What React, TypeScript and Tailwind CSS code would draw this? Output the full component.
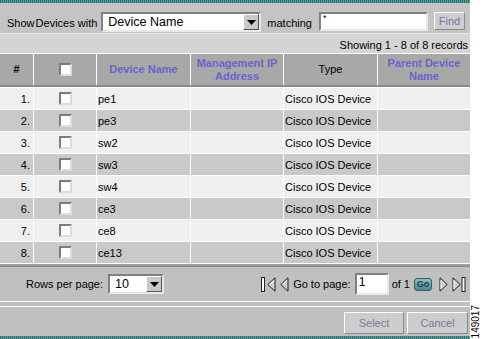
import React from "react";

const rows = ["pe1", "pe3", "sw2", "sw3", "sw4", "ce3", "ce8", "ce13"];

const cols = "grid grid-cols-[33px_62px_93px_92px_93px_92px] gap-x-px";

function Check() {
  return (
    <span className="block w-[13px] h-[13px] bg-white border-2 border-t-[#7b7b7b] border-l-[#7b7b7b] border-r-[#dcdcdc] border-b-[#dcdcdc]" />
  );
}

function Combo({ value, width }: { value: string; width: string }) {
  return (
    <div
      className={`${width} h-[20px] flex items-center bg-white border-2 border-t-[#808080] border-l-[#808080] border-r-[#e8e8e8] border-b-[#e8e8e8]`}
    >
      <span className="flex-1 pl-[5px] text-[12.5px] leading-none text-black">{value}</span>
      <span className="w-[16px] h-[16px] flex items-center justify-center bg-[#c8c8c8] border border-t-white border-l-white border-r-[#555] border-b-[#555]">
        <svg width="9" height="5" viewBox="0 0 9 5">
          <polygon points="0,0 9,0 4.5,5" fill="#000" />
        </svg>
      </span>
    </div>
  );
}

// pager arrows: outlined triangle, optional end bar
function PagerIcon({ dir, bar }: { dir: "l" | "r"; bar?: boolean }) {
  if (dir === "l") {
    return (
      <svg width={bar ? 15 : 9} height="15" viewBox={bar ? "0 0 15 15" : "6 0 9 15"}>
        {bar && <rect x="0.5" y="0.5" width="3" height="14" fill="#fff" stroke="#222" />}
        <polygon points="14,0.8 6.8,7.5 14,14.2" fill="#cfcfcf" stroke="#222" strokeLinejoin="round" />
        <line x1="13" y1="3" x2="8.8" y2="7.3" stroke="#fff" />
      </svg>
    );
  }
  return (
    <svg width={bar ? 14 : 9} height="15" viewBox={bar ? "0 0 14 15" : "0 0 9 15"}>
      <polygon points="1,0.8 8.2,7.5 1,14.2" fill="#cfcfcf" stroke="#222" strokeLinejoin="round" />
      <line x1="2" y1="3" x2="2" y2="12" stroke="#fff" />
      {bar && <rect x="10" y="0.5" width="3" height="14" fill="#fff" stroke="#222" />}
    </svg>
  );
}

export default function App() {
  return (
    <div className="w-[482px] h-[339px] bg-white flex font-['Liberation_Sans',Arial,sans-serif] text-[11px] text-black">
      <div className="w-[470px] flex flex-col bg-[#c4c4c4]">
        <div className="h-[3px] bg-[repeating-linear-gradient(90deg,#2c6f6d_0_1px,#5e9c98_1px_2px)]" />

        {/* search */}
        <div className="h-[30px] flex items-start pt-[9px] pl-[7px]">
          <span className="mt-[5px] leading-[13px]">
            Show<span className="-ml-[2px]"> </span>Devices with
          </span>
          <div className="ml-[4px]">
            <Combo value="Device Name" width="w-[160px]" />
          </div>
          <span className="ml-[6px] mt-[5px] leading-[13px]">matching</span>
          <div className="ml-[7px] w-[109px] h-[19px] bg-white border-2 border-t-[#808080] border-l-[#808080] border-r-[#e8e8e8] border-b-[#e8e8e8] pl-[2px] text-[9px] leading-[9px]">
            *
          </div>
          <button className="ml-[6px] w-[31px] h-[18px] bg-[#cfcfcf] border border-t-white border-l-white border-r-[#8a8a8a] border-b-[#8a8a8a] text-[11px] leading-none text-[#7474a4]">
            Find
          </button>
        </div>
        <div className="h-px bg-[#e6e6e6]" />

        <div className="h-[19px] bg-[#d4d4d4] text-right pr-[2px] pt-[5px] leading-[13px]">
          Showing 1 - 8 of 8 records
        </div>
        <div className="h-px bg-white" />

        {/* header */}
        <div className={`${cols} h-[31px] bg-white font-bold leading-[13px]`}>
          <div className="bg-[#a8a8a8] flex items-center justify-center">#</div>
          <div className="bg-[#a8a8a8] flex items-center justify-center">
            <Check />
          </div>
          <div className="bg-[#a8a8a8] flex items-center justify-center text-[#6666cc]">Device Name</div>
          <div className="bg-[#a8a8a8] flex items-center justify-center text-center text-[#6666cc]">
            Management IP Address
          </div>
          <div className="bg-[#a8a8a8] flex items-center justify-center font-normal">Type</div>
          <div className="bg-[#a8a8a8] flex items-center justify-center text-center text-[#6666cc]">
            Parent Device Name
          </div>
        </div>
        <div className="h-[2px] bg-[#8a8a8a]" />

        {/* rows */}
        <div className="flex flex-col gap-y-px bg-white py-px">
          {rows.map((name, i) => {
            const bg = i % 2 === 0 ? "bg-[#efefef]" : "bg-[#c9c9c9]";
            return (
              <div key={name} className={`${cols} h-[21px] leading-[13px]`}>
                <div className={`${bg} flex items-center justify-end pr-[3px] pt-px`}>{i + 1}.</div>
                <div className={`${bg} flex items-center justify-center pl-px`}>
                  <Check />
                </div>
                <div className={`${bg} flex items-center pl-px pt-px`}>{name}</div>
                <div className={bg} />
                <div className={`${bg} flex items-center pl-px pt-px`}>Cisco IOS Device</div>
                <div className={bg} />
              </div>
            );
          })}
        </div>
        <div className="h-[3px] bg-[linear-gradient(#a8a8a8,#858585)]" />

        {/* pagination */}
        <div className="h-[34px] flex items-center pl-[26px] pr-[4px] bg-[#c0c0c0]">
          <span className="leading-[13px]">Rows per page:</span>
          <div className="ml-[5px]">
            <Combo value="10" width="w-[56px]" />
          </div>
          <div className="ml-auto flex items-center">
            <PagerIcon dir="l" bar />
            <span className="ml-[4px] flex">
              <PagerIcon dir="l" />
            </span>
            <span className="ml-[4px] leading-[13px]">Go to page:</span>
            <div className="ml-[4px] w-[34px] h-[22px] bg-white border-2 border-t-[#808080] border-l-[#808080] border-r-[#e8e8e8] border-b-[#e8e8e8] pl-[2px] leading-[14px] text-[12px]">
              1
            </div>
            <span className="ml-[3px] leading-[13px]">of 1</span>
            <span className="ml-[4px] w-[18px] h-[13px] rounded-[3px] border border-[#2f5f5f] bg-[linear-gradient(#8fc0c0,#4d8888)] flex items-center justify-center text-[9px] font-bold leading-none text-[#173b5c]">
              Go
            </span>
            <span className="ml-[7px] flex">
              <PagerIcon dir="r" />
            </span>
            <span className="ml-[4px] flex">
              <PagerIcon dir="r" bar />
            </span>
          </div>
        </div>
        <div className="h-px bg-white" />
        <div className="h-[4px] bg-[#c0c0c0]" />
        <div className="h-px bg-white" />

        {/* buttons */}
        <div className="h-[29px] flex items-start justify-end gap-[3px] pt-[5px] pr-[2px] bg-[#c0c0c0]">
          <button className="w-[60px] h-[22px] bg-[#cdcdcd] border border-t-white border-l-white border-r-[#8a8a8a] border-b-[#8a8a8a] text-[11px] leading-none text-[#7a7a9c]">
            Select
          </button>
          <button className="w-[61px] h-[22px] bg-[#cdcdcd] border border-t-white border-l-white border-r-[#8a8a8a] border-b-[#8a8a8a] text-[11px] leading-none text-[#7a7a9c]">
            Cancel
          </button>
        </div>
        <div className="h-[3px] bg-[repeating-linear-gradient(90deg,#2c6f6d_0_1px,#5e9c98_1px_2px)]" />
      </div>

      <div className="flex-1 flex flex-col justify-end items-center pb-px">
        <span className="[writing-mode:vertical-rl] rotate-180 text-[10px] leading-[10px] font-['Liberation_Sans',Arial,sans-serif]">
          149017
        </span>
      </div>
    </div>
  );
}
